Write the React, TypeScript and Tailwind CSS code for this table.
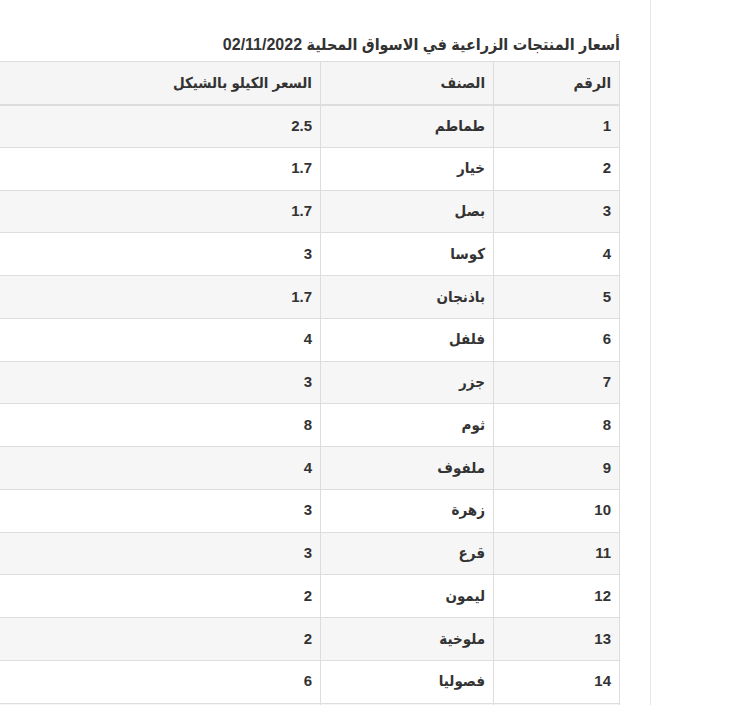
import React from 'react';

const rows: [number, string, string][] = [
  [1, 'طماطم', '2.5'],
  [2, 'خيار', '1.7'],
  [3, 'بصل', '1.7'],
  [4, 'كوسا', '3'],
  [5, 'باذنجان', '1.7'],
  [6, 'فلفل', '4'],
  [7, 'جزر', '3'],
  [8, 'ثوم', '8'],
  [9, 'ملفوف', '4'],
  [10, 'زهرة', '3'],
  [11, 'قرع', '3'],
  [12, 'ليمون', '2'],
  [13, 'ملوخية', '2'],
  [14, 'فصوليا', '6'],
  [15, 'بطاطا', '2'],
];

export default function App() {
  return (
    <div
      dir="rtl"
      className="flex h-[705px] overflow-hidden bg-white text-[#333]"
      style={{ fontFamily: '"Liberation Sans", "DejaVu Sans Condensed", "DejaVu Sans", sans-serif' }}
    >
      {/* side column */}
      <div className="w-[81px] shrink-0 border-l border-[#e7e7e7]" />

      {/* content */}
      <div className="flex-1 pr-[30px] pt-[36px]">
        <h4 className="mb-[8px] text-[16px] font-bold leading-[17px]">
          أسعار المنتجات الزراعية في الاسواق المحلية 02/11/2022
        </h4>
        <table className="w-[760px] border-collapse text-[15px] font-bold">
          <thead>
            <tr className="bg-[#f5f5f5]">
              <th className="h-[43px] w-[126px] border border-b-2 border-[#ddd] px-[8px] text-right">الرقم</th>
              <th className="w-[173px] border border-b-2 border-[#ddd] px-[8px] text-right">الصنف</th>
              <th className="border border-b-2 border-[#ddd] px-[8px] text-right">السعر الكيلو بالشيكل</th>
            </tr>
          </thead>
          <tbody>
            {rows.map(([n, name, price]) => (
              <tr key={n} className={n % 2 === 1 ? 'bg-[#f6f6f6]' : 'bg-white'}>
                <td className="h-[42.75px] border border-[#ddd] px-[8px]">{n}</td>
                <td className="border border-[#ddd] px-[8px]">{name}</td>
                <td className="border border-[#ddd] px-[8px]">{price}</td>
              </tr>
            ))}
          </tbody>
        </table>
      </div>
    </div>
  );
}
